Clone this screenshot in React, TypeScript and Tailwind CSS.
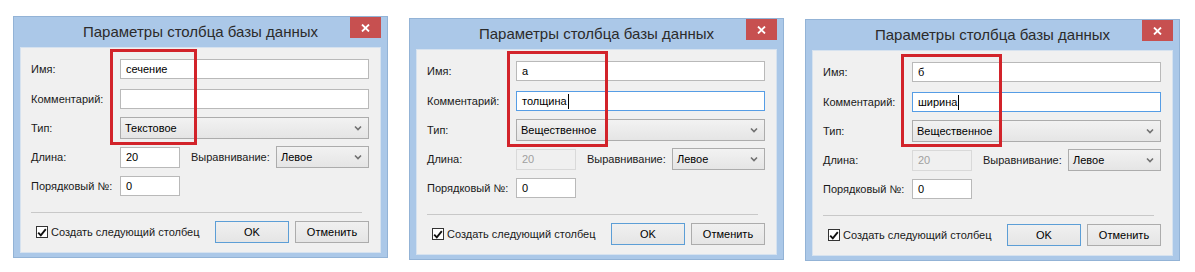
import type { ReactNode } from "react"

const font = { fontFamily: '"Segoe UI", "Liberation Sans", Arial, sans-serif' }

type DialogProps = {
  name: string
  comment: string
  commentFocused?: boolean
  type: string
  lengthDisabled?: boolean
  mark: string
  className?: string
}

function TextBox({ value, focused, disabled, className }: { value: string; focused?: boolean; disabled?: boolean; className?: string }) {
  return (
    <div
      className={
        "h-[20px] flex items-center px-[5px] border " +
        (focused
          ? "border-[#569de5] bg-white text-black"
          : disabled
            ? "border-[#d9d9d9] bg-[#f0f0f0] text-[#a0a0a0]"
            : "border-[#b9b9b9] bg-white text-black") +
        " " +
        (className ?? "")
      }
    >
      <span>{value}</span>
      {focused && <span className="w-px h-[15px] bg-black ml-px" />}
    </div>
  )
}

function Combo({ value, className }: { value: string; className?: string }) {
  return (
    <div
      className={
        "h-[22px] flex items-center justify-between pl-[4px] pr-[6px] text-black border border-[#acacac] bg-gradient-to-b from-[#f2f2f2] to-[#e5e5e5] " +
        (className ?? "")
      }
    >
      <span>{value}</span>
      <svg width="8" height="6" viewBox="0 0 8 6">
        <path d="M1 1.5 L4 4.5 L7 1.5" fill="none" stroke="#707070" strokeWidth="1.6" />
      </svg>
    </div>
  )
}

function Row({ label, children, className }: { label: string; children: ReactNode; className?: string }) {
  return (
    <div className={"flex items-center " + (className ?? "")}>
      <span className="w-[89px] shrink-0">{label}</span>
      {children}
    </div>
  )
}

function Dialog({ name, comment, commentFocused, type, lengthDisabled, mark, className }: DialogProps) {
  return (
    <div className={"relative w-[375px] h-[242px] shrink-0 flex flex-col bg-[#abc8e8] border border-[#93b3d6] whitespace-nowrap " + (className ?? "")}>
      <div className="relative h-[30px] flex items-center justify-center">
        <span className="text-[15px] text-[#2b2b2b] pt-[1px]">Параметры столбца базы данных</span>
        <div className="absolute right-[6px] top-0 w-[31px] h-[21px] bg-[#c75050] flex items-center justify-center">
          <svg width="9" height="8" viewBox="0 0 9 8">
            <path d="M1 0.5 L8 7.5 M8 0.5 L1 7.5" stroke="white" strokeWidth="1.8" />
          </svg>
        </div>
      </div>
      <div className="flex-1 mx-[6px] mb-[4px] bg-[#f0f0f0] border border-[#d6e2ef] pt-[11px] pl-[10px] pr-[11px] text-[11px] text-[#1a1a1a] flex flex-col">
        <Row label="Имя:">
          <TextBox value={name} className="flex-1" />
        </Row>
        <Row label="Комментарий:" className="mt-[10px]">
          <TextBox value={comment} focused={commentFocused} className="flex-1" />
        </Row>
        <Row label="Тип:" className="mt-[8px]">
          <Combo value={type} className="flex-1" />
        </Row>
        <Row label="Длина:" className="mt-[7px]">
          <TextBox value="20" disabled={lengthDisabled} className="w-[60px] h-[21px]" />
          <span className="ml-[11px] w-[85px]">Выравнивание:</span>
          <Combo value="Левое" className="w-[93px] h-[21px]" />
        </Row>
        <Row label="Порядковый №:" className="mt-[8px]">
          <TextBox value="0" className="w-[60px]" />
        </Row>
        <div className="mt-[16px] mr-[7px] h-px bg-[#c8c8c8]" />
        <div className="mt-[8px] flex items-center">
          <div className="ml-[5px] w-[12px] h-[12px] border border-[#333] bg-white flex items-center justify-center">
            <svg width="10" height="9" viewBox="0 0 10 9">
              <path d="M1.2 4.6 L3.8 7.3 L8.8 1.2" fill="none" stroke="#111" strokeWidth="1.9" />
            </svg>
          </div>
          <span className="ml-[3px]">Создать следующий столбец</span>
          <div className="ml-auto flex gap-[6px]">
            <div className="w-[74px] h-[22px] flex items-center justify-center border border-[#5c9ed6] bg-gradient-to-b from-[#f0f0f0] to-[#e5e5e5] text-black">OK</div>
            <div className="w-[74px] h-[22px] flex items-center justify-center border border-[#acacac] bg-gradient-to-b from-[#f0f0f0] to-[#e5e5e5] text-black">Отменить</div>
          </div>
        </div>
      </div>
      <div className={"absolute border-[3px] border-[#d2232a] " + mark} />
    </div>
  )
}

export default function App() {
  return (
    <div className="w-[1195px] h-[272px] bg-white flex items-start" style={font}>
      <Dialog
        className="ml-[13px] mt-[16px]"
        name="сечение"
        comment=""
        type="Текстовое"
        mark="left-[96px] top-[32px] w-[87px] h-[96px]"
      />
      <Dialog
        className="ml-[21px] mt-[18px]"
        name="а"
        comment="толщина"
        commentFocused
        type="Вещественное"
        lengthDisabled
        mark="left-[97px] top-[32px] w-[101px] h-[96px]"
      />
      <Dialog
        className="ml-[21px] mt-[19px]"
        name="б"
        comment="ширина"
        commentFocused
        type="Вещественное"
        lengthDisabled
        mark="left-[95px] top-[34px] w-[101px] h-[93px]"
      />
    </div>
  )
}
